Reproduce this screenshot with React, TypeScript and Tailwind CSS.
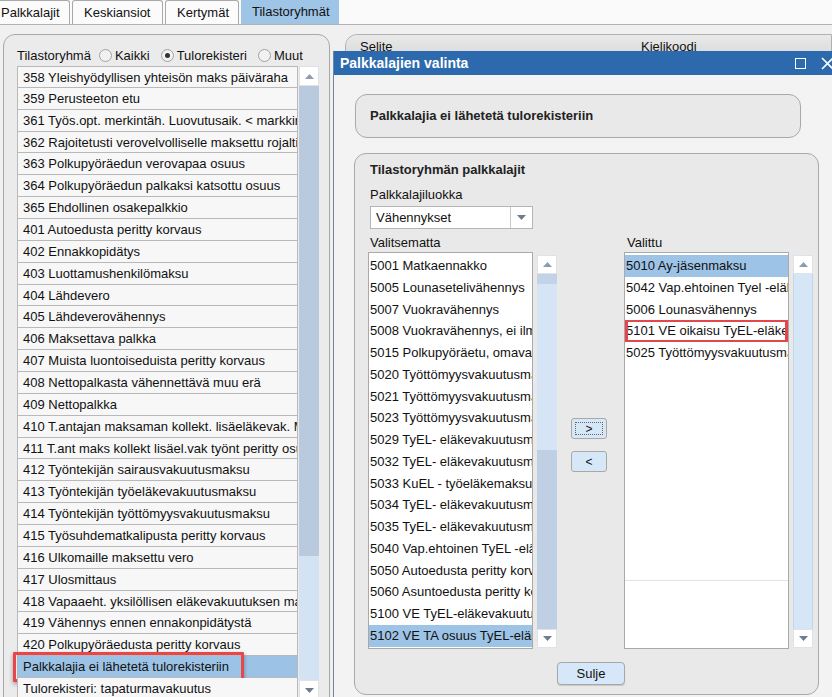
import React from 'react';

const leftItems = [
  '358 Yleishyödyllisen yhteisön maks päiväraha',
  '359 Perusteeton etu',
  '361 Työs.opt. merkintäh. Luovutusaik. < markkinahinta',
  '362 Rajoitetusti verovelvolliselle maksettu rojalti',
  '363 Polkupyöräedun verovapaa osuus',
  '364 Polkupyöräedun palkaksi katsottu osuus',
  '365 Ehdollinen osakepalkkio',
  '401 Autoedusta peritty korvaus',
  '402 Ennakkopidätys',
  '403 Luottamushenkilömaksu',
  '404 Lähdevero',
  '405 Lähdeverovähennys',
  '406 Maksettava palkka',
  '407 Muista luontoiseduista peritty korvaus',
  '408 Nettopalkasta vähennettävä muu erä',
  '409 Nettopalkka',
  '410 T.antajan maksaman kollekt. lisäeläkevak. Maksu',
  '411 T.ant maks kollekt lisäel.vak työnt peritty osuus',
  '412 Työntekijän sairausvakuutusmaksu',
  '413 Työntekijän työeläkevakuutusmaksu',
  '414 Työntekijän työttömyysvakuutusmaksu',
  '415 Työsuhdematkalipusta peritty korvaus',
  '416 Ulkomaille maksettu vero',
  '417 Ulosmittaus',
  '418 Vapaaeht. yksilöllisen eläkevakuutuksen maksu',
  '419 Vähennys ennen ennakonpidätystä',
  '420 Polkupyöräedusta peritty korvaus',
  'Palkkalajia ei lähetetä tulorekisteriin',
  'Tulorekisteri: tapaturmavakuutus',
];

const unselected = [
  '5001 Matkaennakko',
  '5005 Lounasetelivähennys',
  '5007 Vuokravähennys',
  '5008 Vuokravähennys, ei ilmoiteta',
  '5015 Polkupyöräetu, omavastuu',
  '5020 Työttömyysvakuutusmaksu',
  '5021 Työttömyysvakuutusmaksu',
  '5023 Työttömyysvakuutusmaksu',
  '5029 TyEL- eläkevakuutusmaksu',
  '5032 TyEL- eläkevakuutusmaksu',
  '5033 KuEL - työeläkemaksu',
  '5034 TyEL- eläkevakuutusmaksu',
  '5035 TyEL- eläkevakuutusmaksu',
  '5040 Vap.ehtoinen TyEL -eläke',
  '5050 Autoedusta peritty korvaus',
  '5060 Asuntoedusta peritty korvaus',
  '5100 VE TyEL-eläkevakuutusmaksu',
  '5102 VE TA osuus TyEL-eläkemaksu',
];

const selected = [
  '5010 Ay-jäsenmaksu',
  '5042 Vap.ehtoinen Tyel -eläkemaksu',
  '5006 Lounasvähennys',
  '5101 VE oikaisu TyEL-eläkemaksu',
  '5025 Työttömyysvakuutusmaksu',
];

function Arrow({ up }: { up?: boolean }) {
  return (
    <svg width="9" height="5" viewBox="0 0 9 5">
      {up ? <path d="M0 5 L4.5 0 L9 5 Z" fill="#8e9bb0" /> : <path d="M0 0 L4.5 5 L9 0 Z" fill="#6f7c90" />}
    </svg>
  );
}

type Segment = { h: string; color: string };

function ScrollBar({ btn, segments, className }: { btn: string; segments: Segment[]; className: string }) {
  return (
    <div className={`flex flex-col ${className}`}>
      <div className={`flex shrink-0 items-center justify-center border border-[#dfe3e8] bg-white ${btn}`}>
        <Arrow up />
      </div>
      {segments.map((s, i) => (
        <div key={i} className={`${s.h} ${s.color}`} />
      ))}
      <div className={`flex shrink-0 items-center justify-center border border-[#dfe3e8] bg-white ${btn}`}>
        <Arrow />
      </div>
    </div>
  );
}

function Radio({ checked, label }: { checked?: boolean; label: string }) {
  return (
    <span className="flex items-center gap-[3px]">
      <span className="flex h-[13px] w-[13px] items-center justify-center rounded-full border border-[#a2a2a2] bg-[#f1f1f1]">
        {checked && <span className="h-[5px] w-[5px] rounded-full bg-[#333]" />}
      </span>
      <span>{label}</span>
    </span>
  );
}

function DialogList({ items, active, flagged, slots }: { items: string[]; active: number; flagged?: number; slots?: number }) {
  return (
    <div className="relative h-[397px] w-[165px] border border-[#a9a9a9] bg-white pt-[2px]">
      <div className={slots ? 'h-[326px] border-b border-[#e2e2e2]' : ''}>
        {items.map((t, i) => (
          <div
            key={t}
            className={`relative h-[21.76px] overflow-hidden whitespace-nowrap pl-[1px] leading-[21.76px] ${i === active ? 'bg-[#9dc3e6]' : ''}`}
          >
            {t}
            {i === flagged && (
              <span className="absolute left-0 top-[-1px] h-[24px] w-[163px] border-[3px] border-[#e3474c] shadow-[0_1px_3px_rgba(0,0,0,0.35)]" />
            )}
          </div>
        ))}
      </div>
    </div>
  );
}

export default function App() {
  return (
    <div className="relative h-[697px] w-[832px] overflow-hidden bg-[#f0f0f0] font-['Liberation_Sans',Arial,sans-serif] text-[13px] text-[#111]">
      {/* tabs */}
      <div className="flex h-[25px] items-end gap-[2px] border-b border-[#b4b4b4] bg-[#fafafa]">
        <div className="ml-[-11px] flex h-[24px] w-[81px] items-center rounded-t-[3px] border border-b-0 border-[#a9a9a9] bg-[#fbfbfb] pl-[11px]">Palkkalajit</div>
        <div className="flex h-[24px] w-[91px] items-center rounded-t-[3px] border border-b-0 border-[#a9a9a9] bg-[#fbfbfb] pl-[11px]">Keskiansiot</div>
        <div className="flex h-[24px] w-[74px] items-center rounded-t-[3px] border border-b-0 border-[#a9a9a9] bg-[#fbfbfb] pl-[11px]">Kertymät</div>
        <div className="flex h-[25px] w-[98px] items-center bg-[#9ec4e6] pl-[11px]">Tilastoryhmät</div>
      </div>

      <div className="flex gap-[15px] pl-[3px] pt-[9px]">
        {/* left panel */}
        <div className="h-[700px] w-[327px] shrink-0 rounded-[12px] border border-[#a8a8a8] bg-[#ebebeb] pl-[13px] pt-[10px]">
          <div className="flex h-[21px] items-center gap-[8px]">
            <span>Tilastoryhmä</span>
            <Radio label="Kaikki" />
            <span className="ml-[3px]"><Radio checked label="Tulorekisteri" /></span>
            <span className="ml-[3px]"><Radio label="Muut" /></span>
          </div>
          <div className="flex">
            <div className="w-[281px]">
              {leftItems.map((t, i) => (
                <div
                  key={t}
                  className={`relative h-[21.86px] overflow-hidden whitespace-nowrap border-b border-l border-r border-[#b9b9b9] pl-[5px] leading-[21px] ${i === 0 ? 'border-t' : ''} ${i === 27 ? 'overflow-visible bg-[#9cc3e5]' : 'bg-[#f7f7f7]'}`}
                >
                  <span className="block w-[274px] overflow-hidden">{t}</span>
                  {i === 27 && (
                    <span className="absolute left-[-5px] top-[-4px] h-[30px] w-[231px] rounded-[1px] border-[3px] border-[#e8464b] shadow-[0_2px_4px_rgba(0,0,0,0.35)]" />
                  )}
                </div>
              ))}
            </div>
            <ScrollBar
              className="ml-[1px] w-[20px]"
              btn="h-[20px]"
              segments={[
                { h: 'h-[470px]', color: 'bg-[#b9c9de]' },
                { h: 'h-[124px]', color: 'bg-[#d3e3f3]' },
              ]}
            />
          </div>
        </div>

        {/* right panel behind dialog */}
        <div className="h-[700px] flex-1 rounded-tl-[12px] border border-[#b0b0b0] bg-[#ececec]">
          <div className="flex h-[24px] items-center rounded-tl-[12px] bg-gradient-to-b from-[#e9e9e9] to-[#d8d8d8] pl-[14px] text-[13px]">
            <span className="w-[281px]">Selite</span>
            <span>Kielikoodi</span>
          </div>
        </div>
      </div>

      {/* dialog */}
      <div className="absolute left-[333px] top-[51px] h-[660px] w-[520px] border-l border-[#6f86a6] bg-[#f3f3f3]">
        <div className="flex h-[24px] items-center bg-[#2d6aad] pl-[6px] text-white">
          <span className="text-[14px] font-bold">Palkkalajien valinta</span>
          <span className="ml-auto mr-[47px] h-[11px] w-[11px] border-[1.5px] border-white" />
        </div>
        <svg className="absolute left-[487px] top-[6px]" width="14" height="13" viewBox="0 0 14 13">
          <path d="M1 1 L12 12 M12 1 L1 12" stroke="white" strokeWidth="1.6" />
        </svg>

        <div className="ml-[21px] mt-[19px] flex h-[44px] w-[446px] items-center rounded-[12px] border border-[#a9a9a9] bg-[#e9e9e9] pl-[14px] font-bold text-[#222]">
          Palkkalajia ei lähetetä tulorekisteriin
        </div>

        <div className="ml-[20px] mt-[15px] h-[542px] w-[465px] rounded-[12px] border border-[#a9a9a9] bg-[#e9e9e9] pt-[7px]">
          <div className="pl-[15px]">
            <div className="h-[18px] font-bold leading-[18px] text-[#222]">Tilastoryhmän palkkalajit</div>
            <div className="mt-[7px] h-[18px] leading-[18px]">Palkkalajiluokka</div>
            <div className="mt-[2px] flex h-[23px] w-[163px] items-center border border-[#b5b5b5] bg-white">
              <span className="flex-1 pl-[5px]">Vähennykset</span>
              <span className="flex h-full w-[22px] items-center justify-center border-l border-[#c8c8c8]">
                <Arrow />
              </span>
            </div>
          </div>

          <div className="mt-[5px] flex pl-[13px]">
            <div className="flex flex-col">
              <div className="h-[18px] pl-[2px] leading-[18px]">Valitsematta</div>
              <div className="flex gap-[4px]">
                <DialogList items={unselected} active={17} />
                <ScrollBar
                  className="mt-[3px] w-[20px]"
                  btn="h-[19px]"
                  segments={[
                    { h: 'h-[10px]', color: 'bg-[#c3d3e7]' },
                    { h: 'h-[166px]', color: 'bg-[#d5e5f5]' },
                    { h: 'h-[179px]', color: 'bg-[#bfcfe4]' },
                  ]}
                />
              </div>
            </div>

            <div className="flex w-[67px] flex-col pl-[14px] pt-[184px]">
              <div className="relative flex h-[21px] w-[36px] items-center justify-center rounded-[3px] border border-[#a8a8a8] bg-[#d6e8f8]">
                <span className="absolute inset-[3px] border border-dotted border-[#666]" />
                <span className="text-[12px]">&gt;</span>
              </div>
              <div className="mt-[12px] flex h-[21px] w-[36px] items-center justify-center rounded-[3px] border border-[#a8a8a8] bg-[#d6e8f8] text-[12px]">
                &lt;
              </div>
            </div>

            <div className="flex flex-col">
              <div className="h-[18px] pl-[3px] leading-[18px]">Valittu</div>
              <div className="flex gap-[4px]">
                <DialogList items={selected} active={0} flagged={3} slots={15} />
                <ScrollBar
                  className="mt-[3px] w-[20px]"
                  btn="h-[19px]"
                  segments={[{ h: 'h-[355px]', color: 'border-x border-[#c4d5e8] bg-[#d5e6f6]' }]}
                />
              </div>
            </div>
          </div>

          <div className="mt-[13px] pl-[202px]">
            <div className="flex h-[23px] w-[68px] items-center justify-center rounded-[4px] border border-[#a8a8a8] bg-[#d5e7f8] shadow-[0_1px_1px_rgba(0,0,0,0.15)]">
              Sulje
            </div>
          </div>
        </div>
      </div>
    </div>
  );
}
